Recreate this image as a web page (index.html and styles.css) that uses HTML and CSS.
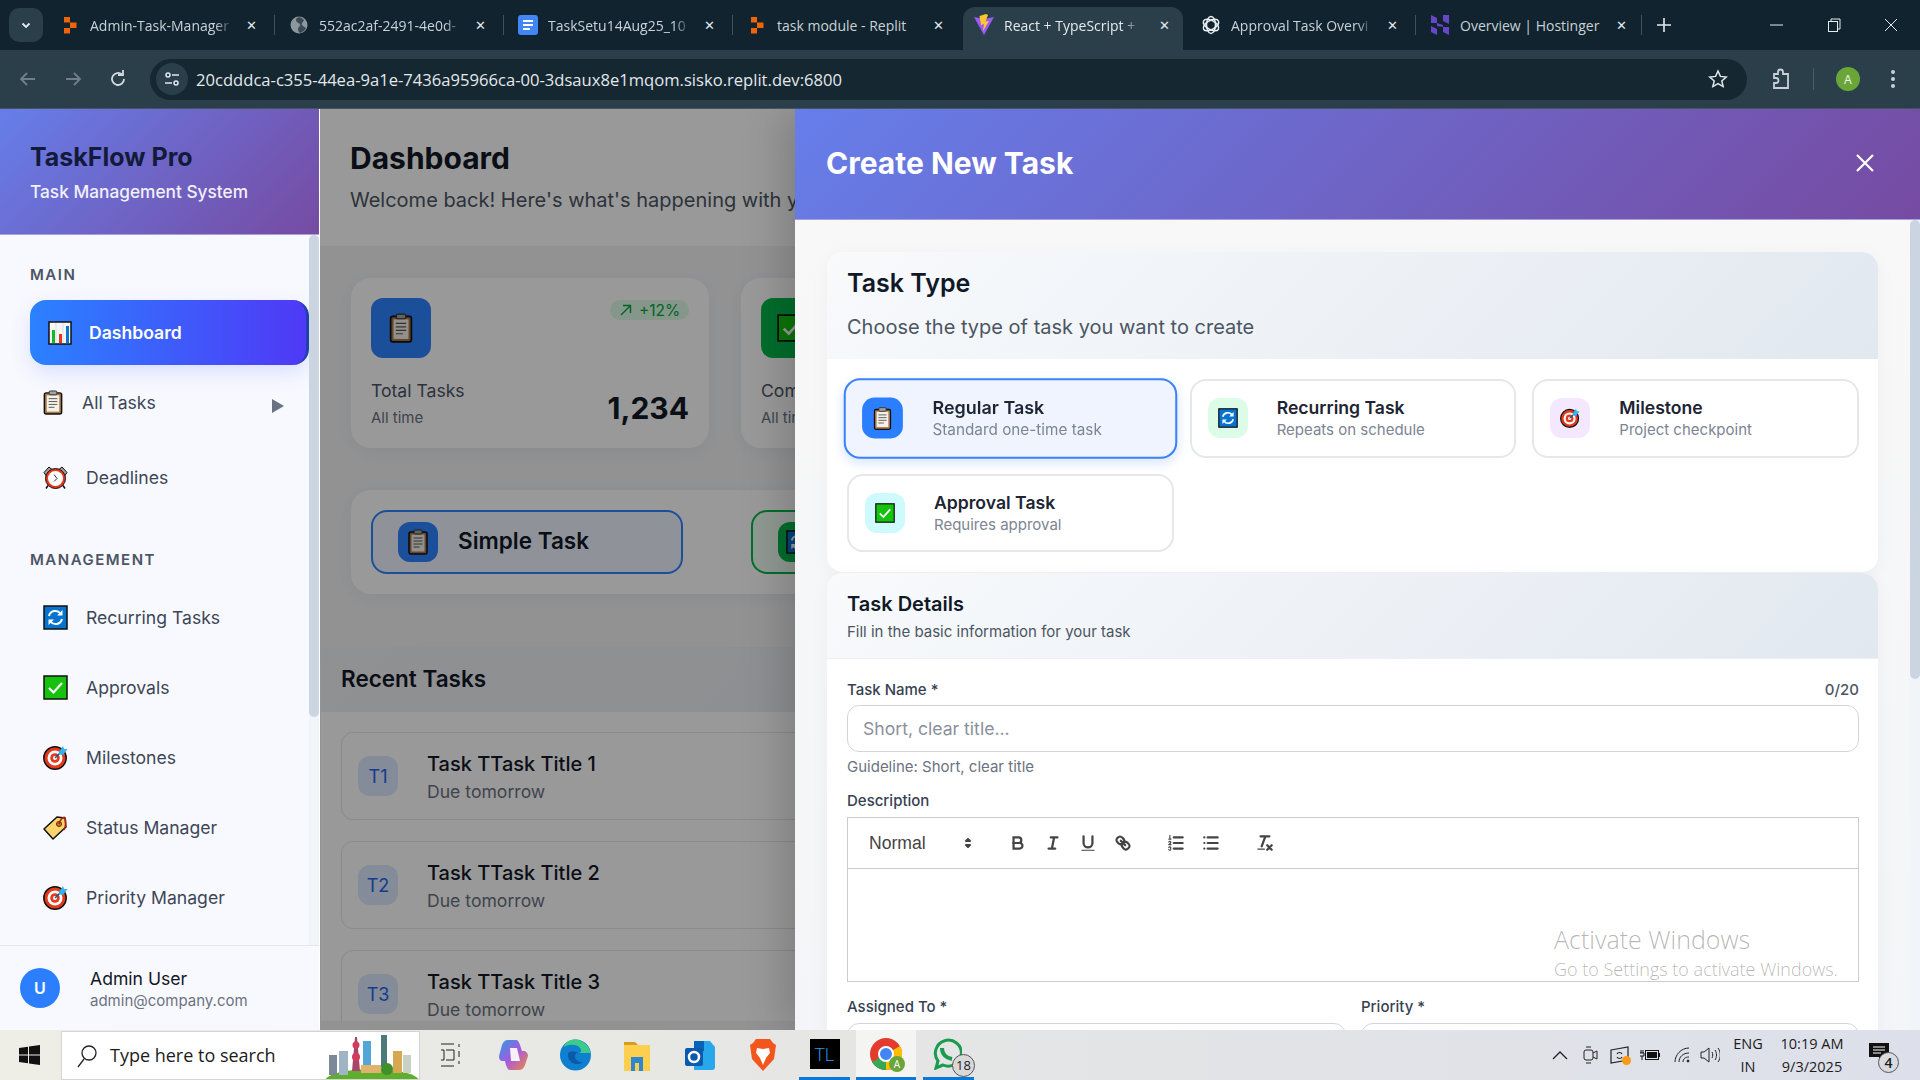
FILE: index.html
```html
<!DOCTYPE html>
<html lang="en">
<head>
    <meta charset="UTF-8">
    <title>React + TypeScript - TaskFlow Pro</title>
    <link rel="stylesheet" href="styles.css">
</head>
<body>
    <!-- shared emoji style icons -->
    <svg class="defs" width="0" height="0">
        <symbol id="i-clip" viewBox="0 0 20 26">
            <rect x="1" y="3" width="18" height="22" rx="2" fill="#a9764c" stroke="#111" stroke-width="1.5"/>
            <rect x="3.5" y="5.5" width="13" height="17" fill="#f5f1e8"/>
            <rect x="6" y="1" width="8" height="4" rx="1" fill="#a3a3a3" stroke="#333"/>
            <path d="M5.5 9h9M5.5 12h9M5.5 15h9M5.5 18h6" stroke="#555" stroke-width="1"/>
        </symbol>
        <symbol id="i-chart" viewBox="0 0 24 24">
            <rect x="1" y="1" width="22" height="22" fill="#f6f6f6" stroke="#111" stroke-width="1.5"/>
            <path d="M8 2v20M15 2v20" stroke="#ddd"/>
            <rect x="4" y="9" width="3" height="13" fill="#16b82a"/>
            <rect x="11" y="13" width="3" height="9" fill="#e8341c"/>
            <rect x="18" y="5" width="3" height="17" fill="#0a74d0"/>
        </symbol>
        <symbol id="i-clock" viewBox="0 0 25 24">
            <path d="M1 7 6 1.500 9 4 3 10ZM24 7 19 1.500 16 4 22 10Z" fill="#a0a0a0" stroke="#111"/>
            <path d="M5 20 3 23M20 20l2 3" stroke="#111" stroke-width="1.500"/>
            <circle cx="12.500" cy="13" r="10" fill="#e5391c" stroke="#111"/>
            <circle cx="12.500" cy="13" r="7.500" fill="#fff"/>
            <path d="M11 9l3 4-3 3" fill="none" stroke="#333"/>
        </symbol>
        <symbol id="i-repeat" viewBox="0 0 25 25">
            <rect x="1" y="1" width="23" height="23" fill="#0673cf" stroke="#111" stroke-width="1.500"/>
            <path d="M6 11a6.500 6.500 0 0 1 11.500-2.500M19 14a6.500 6.500 0 0 1-11.500 2.500" fill="none" stroke="#fff" stroke-width="2"/>
            <path d="M19.500 5v5.500H14ZM5.500 20v-5.500H11Z" fill="#fff"/>
        </symbol>
        <symbol id="i-check" viewBox="0 0 25 25">
            <rect x="1" y="1" width="23" height="23" fill="#17c20f" stroke="#111" stroke-width="1.500"/>
            <path d="M6 13l4.500 4.500L19 8" fill="none" stroke="#fff" stroke-width="2.200"/>
        </symbol>
        <symbol id="i-target" viewBox="0 0 25 25">
            <circle cx="12" cy="13" r="11.200" fill="#e5391c" stroke="#111" stroke-width="1.500"/>
            <circle cx="12" cy="13" r="7.500" fill="#fff"/>
            <circle cx="12" cy="13" r="4.800" fill="#e5391c"/>
            <circle cx="12" cy="13" r="2" fill="#fff"/>
            <path d="M12 13 19 6" stroke="#0a5f9e" stroke-width="1.500"/>
            <path d="M16 7l4-6 1 3 3.500 0-4.500 6-3.500-.5Z" fill="#2fb4ee"/>
        </symbol>
        <symbol id="i-tag" viewBox="0 0 25 25">
            <path d="M1 14 14 2l8 1 1 9L10 24Z" fill="#fbd46d" stroke="#111" stroke-width="1.500" stroke-linejoin="round"/>
            <circle cx="16" cy="9" r="2.500" fill="#c9761c" stroke="#6b2c00"/>
            <path d="M16 9c1-5 5-8 6-6s1 8-1 12" fill="none" stroke="#b3200c" stroke-width="1.500"/>
        </symbol>
        <symbol id="i-replit" viewBox="0 0 14 18">
            <path d="M1 1h6v5.500H1ZM7 6.500h6.500V12H7ZM1 12h6v5.500H1Z" fill="#f26207"/>
        </symbol>
    </svg>

    <div class="tabstrip">
        <div class="tab-list-btn">
            <svg width="12" height="12" viewBox="0 0 12 12"><path d="M2.500 4.500 6 8l3.500-3.500" fill="none" stroke="#e6ebee" stroke-width="1.800"/></svg>
        </div>
        <div class="tab">
            <span class="tab-icon"><svg width="14" height="18"><use href="#i-replit"/></svg></span>
            <span class="tab-title">Admin-Task-Manager</span>
            <span class="tab-close">&#10005;</span>
        </div>
        <div class="tab">
            <span class="tab-icon">
                <svg width="18" height="18" viewBox="0 0 18 18"><circle cx="9" cy="9" r="8.500" fill="#8b969d"/><path d="M9 1c-3 1-4 3-2 5s3 1 3 3-2 2-2 4 1 3 2 4c3-1 5-3 6-5-2-1-3-2-4-3s1-3 2-5C12 2 10 1 9 1Z" fill="#3b4a54"/></svg>
            </span>
            <span class="tab-title">552ac2af-2491-4e0d-</span>
            <span class="tab-close">&#10005;</span>
        </div>
        <div class="tab">
            <span class="tab-icon">
                <svg width="20" height="20" viewBox="0 0 20 20"><rect width="20" height="20" rx="3" fill="#4285f4"/><path d="M5 6h10M5 10h10M5 14h7" stroke="#fff" stroke-width="2"/></svg>
            </span>
            <span class="tab-title">TaskSetu14Aug25_10</span>
            <span class="tab-close">&#10005;</span>
        </div>
        <div class="tab tab-plain">
            <span class="tab-icon"><svg width="14" height="18"><use href="#i-replit"/></svg></span>
            <span class="tab-title">task module - Replit</span>
            <span class="tab-close">&#10005;</span>
        </div>
        <div class="tab tab-active">
            <span class="tab-icon">
                <svg width="20" height="22" viewBox="0 0 20 22"><path d="M0 3 10 21 20 3 10 5Z" fill="#9a5cf5"/><path d="M12 0 5.500 2 7 11 10 10l-1 7 6-10-3.500.5L14 1Z" fill="#fdc72d"/></svg>
            </span>
            <span class="tab-title">React + TypeScript +</span>
            <span class="tab-close">&#10005;</span>
        </div>
        <div class="tab">
            <span class="tab-icon">
                <svg width="20" height="20" viewBox="0 0 20 20" fill="none" stroke="#e8edf0" stroke-width="1.500"><ellipse cx="10" cy="10" rx="8.500" ry="4.500" transform="rotate(30 10 10)"/><ellipse cx="10" cy="10" rx="8.500" ry="4.500" transform="rotate(90 10 10)"/><ellipse cx="10" cy="10" rx="8.500" ry="4.500" transform="rotate(150 10 10)"/></svg>
            </span>
            <span class="tab-title">Approval Task Overvi</span>
            <span class="tab-close">&#10005;</span>
        </div>
        <div class="tab tab-last">
            <span class="tab-icon">
                <svg width="18" height="20" viewBox="0 0 18 20"><path d="M0 0l6 3v5L0 8ZM12 0l6-0v9l-6-3ZM0 11l6 3v6l-6-3ZM12 12h6v8l-6-3ZM6 8l6 2v2l-6-1Z" fill="#6747c7"/></svg>
            </span>
            <span class="tab-title">Overview | Hostinger</span>
            <span class="tab-close">&#10005;</span>
        </div>
        <div class="new-tab">
            <svg width="14" height="14" viewBox="0 0 14 14"><path d="M7 0v14M0 7h14" stroke="#e6ebee" stroke-width="1.600"/></svg>
        </div>
        <div class="win-controls">
            <svg width="14" height="14" viewBox="0 0 14 14"><path d="M0 7h13" stroke="#e6ebee"/></svg>
            <svg width="14" height="14" viewBox="0 0 14 14" fill="none" stroke="#e6ebee"><rect x="1.500" y="3.500" width="9" height="10"/><path d="M4 3V1h9v10h-2"/></svg>
            <svg width="14" height="14" viewBox="0 0 14 14"><path d="M1 1l12 12M13 1 1 13" stroke="#e6ebee"/></svg>
        </div>
    </div>

    <div class="toolbar">
        <svg class="tb-btn" width="24" height="24" viewBox="0 0 24 24" fill="none" stroke="#6e7f89" stroke-width="1.800"><path d="M19 12H5M11 6l-6 6 6 6"/></svg>
        <svg class="tb-btn" width="24" height="24" viewBox="0 0 24 24" fill="none" stroke="#6e7f89" stroke-width="1.800"><path d="M5 12h14M13 6l6 6-6 6"/></svg>
        <svg class="tb-btn" width="24" height="24" viewBox="0 0 24 24" fill="none" stroke="#d3dade" stroke-width="1.800"><path d="M18 12a6 6 0 1 1-2-4.500"/><path d="M17 3v5h-5"/></svg>
        <div class="omnibox">
            <span class="site-info">
                <svg width="18" height="18" viewBox="0 0 18 18" fill="none" stroke="#e3e8ec" stroke-width="1.500"><circle cx="5" cy="5" r="2"/><path d="M9 5h7M2 13h7"/><circle cx="13" cy="13" r="2"/></svg>
            </span>
            <span class="url">20cdddca-c355-44ea-9a1e-7436a95966ca-00-3dsaux8e1mqom.sisko.replit.dev:6800</span>
            <svg class="star" width="20" height="20" viewBox="0 0 20 20" fill="none" stroke="#e3e8ec" stroke-width="1.500"><path d="M10 2l2.400 5.400 5.800.6-4.400 3.900 1.300 5.700L10 14.700l-5.100 2.900 1.300-5.700L1.800 8l5.800-.6Z"/></svg>
        </div>
        <svg class="tb-ext" width="24" height="24" viewBox="0 0 24 24" fill="none" stroke="#c7d0d6" stroke-width="1.800"><path d="M5 7h4V5a2.500 2.500 0 0 1 5 0v2h5v14H5v-5h2a2.500 2.500 0 0 0 0-5H5Z"/></svg>
        <span class="tb-sep"></span>
        <span class="profile">A</span>
        <svg class="tb-dots" width="24" height="24" viewBox="0 0 24 24" fill="#c7d0d6"><circle cx="12" cy="5" r="2"/><circle cx="12" cy="12" r="2"/><circle cx="12" cy="19" r="2"/></svg>
    </div>

    <div class="page">
        <aside class="sidebar">
            <div class="brand">
                <h1>TaskFlow Pro</h1>
                <p>Task Management System</p>
            </div>
            <div class="nav-wrap">
                <nav class="nav-list">
                    <div class="nav-label">MAIN</div>
                    <a class="nav-active"><svg class="nav-active-icon" width="24" height="24"><use href="#i-chart"/></svg>Dashboard</a>
                    <a class="nav-item nav-tasks"><svg class="nav-clip" width="20" height="25"><use href="#i-clip"/></svg>All Tasks<span class="nav-arrow"></span></a>
                    <a class="nav-item nav-deadlines"><svg class="nav-icon" width="25" height="25"><use href="#i-clock"/></svg>Deadlines</a>
                    <div class="nav-label nav-label-second">MANAGEMENT</div>
                    <a class="nav-item"><svg class="nav-icon" width="25" height="25"><use href="#i-repeat"/></svg>Recurring Tasks</a>
                    <a class="nav-item"><svg class="nav-icon" width="25" height="25"><use href="#i-check"/></svg>Approvals</a>
                    <a class="nav-item"><svg class="nav-icon" width="25" height="25"><use href="#i-target"/></svg>Milestones</a>
                    <a class="nav-item"><svg class="nav-icon" width="25" height="25"><use href="#i-tag"/></svg>Status Manager</a>
                    <a class="nav-item"><svg class="nav-icon" width="25" height="25"><use href="#i-target"/></svg>Priority Manager</a>
                </nav>
                <div class="scroll-track"><div class="scroll-thumb nav-thumb"></div></div>
            </div>
            <div class="user-row">
                <span class="avatar">U</span>
                <div class="user-text">
                    <div class="user-name">Admin User</div>
                    <div class="user-mail">admin@company.com</div>
                </div>
            </div>
        </aside>

        <main class="main">
            <header class="main-header">
                <h2>Dashboard</h2>
                <p>Welcome back! Here's what's happening with your tasks today.</p>
            </header>
            <section class="stats">
                <div class="stat-card">
                    <div class="stat-top">
                        <span class="stat-icon stat-blue"><svg width="24" height="30"><use href="#i-clip"/></svg></span>
                        <span class="stat-badge">
                            <svg width="14" height="14" viewBox="0 0 14 14" fill="none" stroke="#00a63e" stroke-width="1.400"><path d="M2 12 11 3M4 2.500h7.500V10"/></svg>
                            +12%
                        </span>
                    </div>
                    <div class="stat-bottom">
                        <div>
                            <div class="stat-label">Total Tasks</div>
                            <div class="stat-sub">All time</div>
                        </div>
                        <div class="stat-value">1,234</div>
                    </div>
                </div>
                <div class="stat-card">
                    <div class="stat-top">
                        <span class="stat-icon stat-green"><svg width="28" height="28"><use href="#i-check"/></svg></span>
                    </div>
                    <div class="stat-bottom">
                        <div>
                            <div class="stat-label">Completed</div>
                            <div class="stat-sub">All time</div>
                        </div>
                    </div>
                </div>
            </section>
            <section class="quick-panel">
                <div class="quick-btn quick-blue">
                    <span class="quick-icon stat-blue"><svg width="20" height="26"><use href="#i-clip"/></svg></span>
                    <span class="quick-text">Simple Task</span>
                </div>
                <div class="quick-btn quick-green">
                    <span class="quick-icon stat-green"><svg width="24" height="24"><use href="#i-repeat"/></svg></span>
                </div>
            </section>
            <section class="recent">
                <div class="recent-head">Recent Tasks</div>
                <div class="recent-body">
                    <div class="recent-item">
                        <span class="recent-icon">T1</span>
                        <div>
                            <div class="recent-title">Task TTask Title 1</div>
                            <div class="recent-due">Due tomorrow</div>
                        </div>
                    </div>
                    <div class="recent-item">
                        <span class="recent-icon">T2</span>
                        <div>
                            <div class="recent-title">Task TTask Title 2</div>
                            <div class="recent-due">Due tomorrow</div>
                        </div>
                    </div>
                    <div class="recent-item">
                        <span class="recent-icon">T3</span>
                        <div>
                            <div class="recent-title">Task TTask Title 3</div>
                            <div class="recent-due">Due tomorrow</div>
                        </div>
                    </div>
                </div>
            </section>
        </main>

        <div class="overlay"></div>

        <div class="modal">
            <div class="modal-head">
                <h2>Create New Task</h2>
                <svg width="20" height="20" viewBox="0 0 20 20"><path d="M2 2l16 16M18 2 2 18" stroke="#fff" stroke-width="2.200"/></svg>
            </div>
            <div class="modal-body">
                <div class="modal-scroll">
                    <section class="form-card type-card">
                        <div class="type-head">
                            <h3>Task Type</h3>
                            <p>Choose the type of task you want to create</p>
                        </div>
                        <div class="type-grid">
                            <div class="type-option type-selected">
                                <span class="type-icon type-blue"><svg width="18" height="23"><use href="#i-clip"/></svg></span>
                                <div>
                                    <div class="type-name">Regular Task</div>
                                    <div class="type-desc">Standard one-time task</div>
                                </div>
                            </div>
                            <div class="type-option">
                                <span class="type-icon type-mint"><svg width="20" height="20"><use href="#i-repeat"/></svg></span>
                                <div>
                                    <div class="type-name">Recurring Task</div>
                                    <div class="type-desc">Repeats on schedule</div>
                                </div>
                            </div>
                            <div class="type-option">
                                <span class="type-icon type-lilac"><svg width="20" height="20"><use href="#i-target"/></svg></span>
                                <div>
                                    <div class="type-name">Milestone</div>
                                    <div class="type-desc">Project checkpoint</div>
                                </div>
                            </div>
                            <div class="type-option">
                                <span class="type-icon type-cyan"><svg width="20" height="20"><use href="#i-check"/></svg></span>
                                <div>
                                    <div class="type-name">Approval Task</div>
                                    <div class="type-desc">Requires approval</div>
                                </div>
                            </div>
                        </div>
                    </section>

                    <section class="form-card details-card">
                        <div class="details-head">
                            <h3>Task Details</h3>
                            <p>Fill in the basic information for your task</p>
                        </div>
                        <div class="details-body">
                            <div class="label-row">
                                <label>Task Name *</label>
                                <span class="counter">0/20</span>
                            </div>
                            <input class="text-input" type="text" placeholder="Short, clear title...">
                            <div class="helper">Guideline: Short, clear title</div>
                            <div class="label-row desc-label"><label>Description</label></div>
                            <div class="editor">
                                <div class="editor-bar">
                                    <span class="picker">Normal</span>
                                    <svg class="ql-arrows" width="18" height="18" viewBox="0 0 18 18"><polygon points="7 11 9 13 11 11"/><polygon points="7 7 9 5 11 7"/></svg>
                                    <svg class="ql ql-bold" viewBox="0 0 18 18"><path d="M5,4H9.500A2.500,2.500,0,0,1,12,6.500v0A2.500,2.500,0,0,1,9.500,9H5V4Z"/><path d="M5,9h5.500A2.500,2.500,0,0,1,13,11.500v0A2.500,2.500,0,0,1,10.500,14H5V9Z"/></svg>
                                    <svg class="ql" viewBox="0 0 18 18"><path d="M7 4h6M5 14h6M8 14l2-10"/></svg>
                                    <svg class="ql" viewBox="0 0 18 18"><path d="M5,3V9a4,4,0,0,0,4,4h0a4,4,0,0,0,4-4V3"/><rect class="ql-fill" x="3" y="15" width="12" height="1" rx=".5"/></svg>
                                    <svg class="ql" viewBox="0 0 18 18"><path d="M7 7l4 4"/><path d="M8.900,4.577a3.476,3.476,0,0,1,.36,4.679A3.476,3.476,0,0,1,4.577,8.900C3.185,7.500,2.035,6.400,4.217,4.217S7.500,3.185,8.900,4.577Z"/><path d="M13.423,9.100a3.476,3.476,0,0,0-4.679-.36,3.476,3.476,0,0,0,.36,4.679c1.392,1.392,2.500,2.542,4.679.36S14.815,10.500,13.423,9.100Z"/></svg>
                                    <svg class="ql ql-gap" viewBox="0 0 18 18"><path d="M7 4h8M7 9h8M7 14h8"/><path class="ql-thin" d="M3.500 2v3.500M2.500 5.500h2M4.500 10.500h-2c0-.23 1.850-1.080 1.850-2.230a.96.96 0 0 0-1.850-.11M2.500 14.850a.96.96 0 0 0 1.850-.11.7.7 0 0 0-.6-.74.69.69 0 0 0 .6-.74.96.96 0 0 0-1.850-.11"/></svg>
                                    <svg class="ql" viewBox="0 0 18 18"><path d="M6 4h9M6 9h9M6 14h9M3 4h.01M3 9h.01M3 14h.01"/></svg>
                                    <svg class="ql ql-gap2" viewBox="0 0 18 18"><path d="M5 3h8M6 12l3.350-9M11 11l4 4M15 11l-4 4"/><rect class="ql-fill" x="2" y="14" width="7" height="1" rx=".5"/></svg>
                                </div>
                                <div class="editor-area"></div>
                            </div>
                            <div class="two-col">
                                <div>
                                    <div class="label-row"><label>Assigned To *</label></div>
                                    <div class="select-box"></div>
                                </div>
                                <div>
                                    <div class="label-row"><label>Priority *</label></div>
                                    <div class="select-box"></div>
                                </div>
                            </div>
                        </div>
                    </section>
                </div>
                <div class="scroll-track modal-track"><div class="scroll-thumb modal-thumb"></div></div>
            </div>
        </div>

        <div class="activate">
            <div class="activate-title">Activate Windows</div>
            <div class="activate-sub">Go to Settings to activate Windows.</div>
        </div>
    </div>

    <div class="taskbar">
        <svg class="win-logo" width="21" height="20" viewBox="0 0 21 20" fill="#111"><path d="M0 3l9-1.300V9.500H0ZM10 1.500 21 0v9.500H10ZM0 10.500h9v7.800L0 17ZM10 10.500h11V20l-11-1.500Z"/></svg>
        <div class="search">
            <svg width="22" height="24" viewBox="0 0 22 24" fill="none" stroke="#222" stroke-width="1.300"><circle cx="13" cy="9" r="7"/><path d="M8 15 2 23"/></svg>
            <span class="search-text">Type here to search</span>
            <svg class="city" width="94" height="48" viewBox="0 0 94 48">
                <ellipse cx="47" cy="50" rx="47" ry="12" fill="#5fae2e"/>
                <rect x="4" y="24" width="8" height="20" fill="#7a8899"/>
                <rect x="14" y="20" width="9" height="24" fill="#9fb4c4"/>
                <path d="M27 40 30 6h2l3 34Z" fill="#a8456b"/>
                <circle cx="31" cy="14" r="3.500" fill="#d33a5f"/>
                <circle cx="31" cy="26" r="4" fill="#d33a5f"/>
                <rect x="38" y="10" width="8" height="30" fill="#52a7d8"/>
                <rect x="56" y="4" width="6" height="32" fill="#4b7a78"/>
                <rect x="36" y="34" width="20" height="8" fill="#e0b26b"/>
                <rect x="68" y="20" width="9" height="22" fill="#d8a752"/>
                <rect x="78" y="24" width="8" height="18" fill="#c9d1c7"/>
                <circle cx="62" cy="38" r="6" fill="#3f8f2b"/>
            </svg>
        </div>
        <svg class="task-view" width="20" height="24" viewBox="0 0 20 24" fill="none" stroke="#222"><path d="M0 1h13M0 7h3v10H0M13 7v10M5 7h8M5 17h8M0 23h13M18 1v3M18 8v6M18 18v3"/></svg>
        <svg class="app app-copilot" width="29" height="32" viewBox="0 0 29 32"><defs><linearGradient id="cop" x1="0" y1="0" x2="1" y2="1"><stop offset="0" stop-color="#2b9be0"/><stop offset=".5" stop-color="#a45be0"/><stop offset="1" stop-color="#f08a3c"/></linearGradient></defs><path d="M9 1h8c2 0 3 2 4 5l2 6h2c2 0 4 2 4 5l-3 9c-1 3-3 5-6 5h-9c-2 0-3-2-4-5l-1-4H4c-3 0-4-2-4-5l3-11C4 3 6 1 9 1Z" fill="url(#cop)"/><path d="M11 9h7l3 13h-9Z" fill="#f5f0fa"/></svg>
        <svg class="app app-edge" width="31" height="32" viewBox="0 0 31 32"><circle cx="15.500" cy="16" r="15.500" fill="#0f7fd0"/><path d="M31 18C31 7 23 .5 15 .5 9 .5 5 4 4 8c5-3 13-3 16 1 2 3 1 5-2 5H31Z" fill="#3dcb8a"/><path d="M8 14c-1 6 3 11 9 11 2 0 4-.5 6-1.500-4-.5-8-2-8-6 0-2 1-3.500 3-3.500-4-2.500-9-1.500-10 0Z" fill="#0a5aa8"/></svg>
        <svg class="app app-folder" width="28" height="32" viewBox="0 0 28 32"><path d="M1 3h11l3 3H1Z" fill="#d99c1e"/><rect x="1" y="6" width="26" height="26" fill="#fdcf4e"/><rect x="8" y="18" width="12" height="14" fill="#2e86cf"/><rect x="12" y="24" width="4" height="8" fill="#fdcf4e"/></svg>
        <svg class="app app-outlook" width="32" height="32" viewBox="0 0 32 32"><path d="M10 2h16l5 6v20a3 3 0 0 1-3 3H10Z" fill="#28a8ea"/><path d="M10 2h10v10H10Z" fill="#0364b8"/><rect x="1" y="9" width="18" height="18" rx="2" fill="#0a5bb0"/><circle cx="10" cy="18" r="5" fill="none" stroke="#fff" stroke-width="2.500"/></svg>
        <svg class="app app-brave" width="26" height="32" viewBox="0 0 26 32"><path d="M6 0h14l3 4 3 2-2 14-11 12L2 20 0 6l3-2Z" fill="#f2561d"/><path d="M7 9l6 1 6-1 1 5-4 5-3 7-3-7-4-5Z" fill="#fff"/></svg>
        <div class="app-wrap app-tl"><span class="tl-box">TL</span></div>
        <div class="app-wrap app-chrome">
            <svg width="32" height="32" viewBox="0 0 32 32"><circle cx="16" cy="16" r="16" fill="#e33b2e"/><path d="M16 16 2 24A16 16 0 0 0 16 32Z" fill="#34a853"/><path d="M16 16 30 8a16 16 0 0 1-14 24Z" fill="#fbbc04"/><circle cx="16" cy="16" r="7" fill="#4285f4" stroke="#fff" stroke-width="2"/></svg>
            <span class="chrome-badge">A</span>
        </div>
        <div class="app-wrap app-whatsapp">
            <svg class="wa-icon" width="30" height="32" viewBox="0 0 30 32" fill="none" stroke="#1a9c4f" stroke-width="3"><path d="M4 30l2-7A13 13 0 1 1 11 27Z"/><path d="M10 10c0 6 4 10 10 11" stroke-width="4"/></svg>
            <span class="wa-badge">18</span>
        </div>
        <div class="tray">
            <svg class="tray-chevron" width="16" height="10" viewBox="0 0 16 10" fill="none" stroke="#222" stroke-width="1.300"><path d="M1 9l7-7 7 7"/></svg>
            <svg class="tray-meet" width="15" height="20" viewBox="0 0 15 20" fill="none" stroke="#222"><rect x="1" y="5" width="9" height="10" rx="2"/><path d="M10 8l4-2v8l-4-2M3 2h5M3 18h5"/></svg>
            <div class="tray-cast">
                <svg width="20" height="20" viewBox="0 0 20 20" fill="none" stroke="#222" stroke-width="1.200"><path d="M1 5l17-3v13L1 18Z"/><path d="M7 9c1-2 4-2 5 0M12 12c-1 2-4 2-5 0"/></svg>
                <span class="cast-dot"></span>
            </div>
            <svg class="tray-battery" width="20" height="12" viewBox="0 0 20 12"><rect x="5.500" y="1.500" width="13" height="9" fill="none" stroke="#111"/><rect x="7" y="3" width="10" height="6" fill="#111"/><rect x="19" y="4" width="1" height="4" fill="#111"/><path d="M0 4h4v3H0M1 1v3M3 1v3M2 7v4" stroke="#111" fill="none"/></svg>
            <svg class="tray-wifi" width="16" height="16" viewBox="0 0 16 16" fill="none" stroke="#222"><path d="M1 15C1 8 7 1 15 1M5 15c0-5 4-9 10-9M9 15c0-3 2-5 6-5"/><circle cx="14" cy="14" r="1" fill="#222"/></svg>
            <svg class="tray-sound" width="20" height="18" viewBox="0 0 20 18" fill="none" stroke="#222"><path d="M1 6h3l5-4v14l-5-4H1ZM12 6c1 2 1 4 0 6M15 4c2 3 2 7 0 10M18 2c3 4 3 10 0 14"/></svg>
            <div class="tray-lang"><div>ENG</div><div>IN</div></div>
            <div class="tray-clock"><div>10:19 AM</div><div>9/3/2025</div></div>
            <div class="tray-notify">
                <svg width="20" height="19" viewBox="0 0 20 19" fill="#111"><path d="M0 0h20v14h-7l-3 5v-5H0Z"/><path d="M4 4h12M4 7h12M4 10h8" stroke="#fff"/></svg>
                <span class="notify-badge">4</span>
            </div>
        </div>
    </div>
</body>
</html>
```
FILE: styles.css
```css
* {
    box-sizing: border-box;
}

html, body {
    margin: 0;
    padding: 0;
    width: 1920px;
    height: 1080px;
    overflow: hidden;
}

body {
    font-family: Inter, "Noto Sans", sans-serif;
    display: flex;
    flex-direction: column;
    background-color: #f3f4f6;
}

h1, h2, h3, p {
    margin: 0;
}

.defs {
    display: block;
    height: 0;
}

/* browser tabs */
.tabstrip {
    height: 50px;
    flex: none;
    display: flex;
    align-items: center;
    background-color: #10232e;
    font-family: "Open Sans", "Noto Sans", sans-serif;
    font-size: 14px;
    color: #c9d2d8;
}

.tab-list-btn {
    width: 34px;
    height: 34px;
    margin: 0 3px 0 9px;
    background-color: #2b3f4a;
    border-radius: 10px;
    display: flex;
    align-items: center;
    justify-content: center;
}

.tab {
    width: 229px;
    height: 50px;
    padding-left: 14px;
    display: flex;
    align-items: center;
    position: relative;
}

.tab::after {
    content: "";
    position: absolute;
    right: 0;
    top: 15px;
    height: 20px;
    width: 1px;
    background-color: #3f515c;
}

.tab-plain::after,
.tab-active::after {
    display: none;
}

.tab-active {
    width: 220px;
    margin: 7px 4px 0 1px;
    height: 43px;
    padding-left: 11px;
    padding-bottom: 7px;
    background-color: #2b3f4a;
    border-radius: 12px 12px 0 0;
    color: #e3e8ec;
}

.tab-last {
    width: 226px;
}

.tab-icon {
    width: 20px;
    margin-right: 10px;
    display: flex;
    justify-content: center;
    flex: none;
}

.tab-title {
    width: 143px;
    white-space: nowrap;
    overflow: hidden;
    -webkit-mask-image: linear-gradient(to right, #000 88%, transparent);
    mask-image: linear-gradient(to right, #000 88%, transparent);
}

.tab-plain .tab-title,
.tab-last .tab-title {
    -webkit-mask-image: none;
    mask-image: none;
}

.tab-active .tab-title {
    width: 136px;
}

.tab-close {
    width: 16px;
    margin-left: 10px;
    font-size: 13px;
    text-align: center;
    color: #e3e8ec;
}

.tab-active .tab-close {
    margin-left: 16px;
}

.new-tab {
    margin-left: 15px;
    display: flex;
}

.win-controls {
    margin-left: auto;
    width: 150px;
    padding-right: 22px;
    display: flex;
    justify-content: space-between;
}

/* address bar */
.toolbar {
    height: 59px;
    flex: none;
    display: flex;
    align-items: center;
    padding-left: 16px;
    background-color: #2b3f4a;
    border-bottom: 1px solid #44555f;
}

.tb-btn {
    margin-right: 21px;
}

.tb-btn:nth-child(3) {
    margin-right: 20px;
}

.omnibox {
    width: 1597px;
    height: 41px;
    display: flex;
    align-items: center;
    padding-left: 6px;
    background-color: #152731;
    border-radius: 21px;
}

.site-info {
    width: 32px;
    height: 32px;
    border-radius: 50%;
    background-color: #2b3f4a;
    display: flex;
    align-items: center;
    justify-content: center;
}

.url {
    margin: 1px 0 0 8px;
    font-family: "Open Sans", "Noto Sans", sans-serif;
    font-size: 16.6px;
    color: #e3e8ec;
}

.star {
    margin-left: auto;
    margin-right: 19px;
}

.tb-ext {
    margin-left: 22px;
}

.tb-sep {
    width: 1px;
    height: 22px;
    margin-left: 20px;
    background-color: #4a5b65;
}

.profile {
    width: 24px;
    height: 24px;
    margin-left: 22px;
    border-radius: 50%;
    background-color: #6aa53a;
    color: #e8f2dd;
    font-size: 12px;
    display: flex;
    align-items: center;
    justify-content: center;
}

.tb-dots {
    margin-left: 21px;
}

/* app */
.page {
    flex: 1;
    min-height: 0;
    display: flex;
    position: relative;
    overflow: hidden;
}

.sidebar {
    width: 320px;
    flex: none;
    display: flex;
    flex-direction: column;
    background-color: #f8f9fe;
    border-right: 1px solid #fff;
    position: relative;
    z-index: 3;
}

.brand {
    height: 126px;
    flex: none;
    padding: 33px 0 0 30px;
    background: linear-gradient(135deg, #667eea, #764ba2);
    border-bottom: 1px solid #a99fdc;
}

.brand h1 {
    font-size: 25px;
    line-height: 30px;
    font-weight: 700;
    color: #141a3a;
}

.brand p {
    margin-top: 7px;
    font-size: 17.3px;
    line-height: 26px;
    font-weight: 500;
    color: #f1f0fb;
}

.nav-wrap {
    flex: 1;
    min-height: 0;
    display: flex;
}

.nav-list {
    flex: 1;
    padding: 30px 0 0 30px;
    overflow: hidden;
}

.nav-label {
    font-size: 15px;
    line-height: 20px;
    font-weight: 600;
    letter-spacing: 1.5px;
    color: #4b5563;
    margin-bottom: 15px;
}

.nav-label-second {
    margin-top: 42px;
    margin-bottom: 18px;
}

.nav-active {
    height: 65px;
    display: flex;
    align-items: center;
    padding-left: 18px;
    font-size: 17.6px;
    font-weight: 600;
    color: #fff;
    background: linear-gradient(90deg, #2b82ff, #4f39f6);
    border-right: 3px solid #2140b0;
    border-radius: 16px;
    box-shadow: 0 8px 20px rgba(59, 90, 246, 0.15);
}

.nav-active-icon {
    margin-right: 17px;
}

.nav-item {
    height: 60px;
    margin-top: 10px;
    padding: 0 0 1px 13px;
    display: flex;
    align-items: center;
    font-size: 17.6px;
    font-weight: 400;
    color: #3d4656;
}

.nav-tasks {
    height: 56px;
}

.nav-deadlines {
    margin-top: 17px;
}

.nav-icon {
    margin-right: 18px;
}

.nav-clip {
    margin-right: 19px;
}

.nav-arrow {
    width: 0;
    height: 0;
    margin: 7px 25px 0 auto;
    border-left: 12px solid #6b7280;
    border-top: 7px solid transparent;
    border-bottom: 7px solid transparent;
}

.scroll-track {
    width: 10px;
    flex: none;
    background-color: #f1f5f9;
}

.scroll-thumb {
    background-color: #cbd5e1;
    border-radius: 5px;
}

.nav-thumb {
    height: 482px;
}

.user-row {
    height: 85px;
    flex: none;
    display: flex;
    align-items: center;
    padding-left: 20px;
    border-top: 1px solid #e5e7eb;
}

.avatar {
    width: 40px;
    height: 40px;
    margin-right: 30px;
    border-radius: 50%;
    background-color: #2b7fff;
    color: #fff;
    font-weight: 600;
    font-size: 16px;
    display: flex;
    align-items: center;
    justify-content: center;
}

.user-text {
    padding-top: 4px;
}

.user-name {
    font-size: 17.6px;
    line-height: 22px;
    font-weight: 400;
    color: #111827;
}

.user-mail {
    font-size: 15px;
    line-height: 22px;
    color: #6b7280;
}

/* dimmed dashboard */
.main {
    flex: 1;
    min-width: 0;
    height: 912px;
    overflow: hidden;
}

.main-header {
    height: 137px;
    padding: 29px 0 0 30px;
    background-color: #fff;
    white-space: nowrap;
}

.main-header h2 {
    font-size: 30px;
    line-height: 40px;
    font-weight: 700;
    color: #111827;
}

.main-header p {
    margin-top: 8px;
    font-size: 20px;
    line-height: 28px;
    color: #4b5563;
}

.stats {
    display: flex;
    gap: 32px;
    margin: 32px 0 0 31px;
}

.stat-card {
    width: 358px;
    height: 170px;
    flex: none;
    padding: 20px;
    background-color: #fff;
    border-radius: 20px;
    box-shadow: 0 4px 20px rgba(0, 0, 0, 0.05);
}

.stat-top {
    display: flex;
    justify-content: space-between;
    align-items: flex-start;
}

.stat-icon {
    width: 60px;
    height: 60px;
    border-radius: 12px;
    display: flex;
    align-items: center;
    justify-content: center;
}

.stat-blue {
    background-color: #2f84ff;
}

.stat-green {
    background-color: #00b84a;
}

.stat-badge {
    margin-top: 2px;
    width: 79px;
    height: 20px;
    border-radius: 10px;
    background-color: #dcfce7;
    color: #00a63e;
    font-size: 15.5px;
    display: flex;
    align-items: center;
    justify-content: center;
    gap: 6px;
}

.stat-bottom {
    margin-top: 21px;
    display: flex;
    justify-content: space-between;
    align-items: flex-end;
}

.stat-label {
    font-size: 17.6px;
    line-height: 24px;
    color: #4b5563;
}

.stat-sub {
    margin-top: 5px;
    font-size: 15px;
    line-height: 20px;
    color: #6b7280;
}

.stat-value {
    font-size: 30px;
    line-height: 40px;
    font-weight: 700;
    color: #111827;
}

.quick-panel {
    width: 1538px;
    height: 104px;
    margin: 42px 0 0 31px;
    padding: 20px;
    display: flex;
    gap: 68px;
    background-color: #fff;
    border-radius: 20px;
    box-shadow: 0 4px 20px rgba(0, 0, 0, 0.05);
}

.quick-btn {
    width: 312px;
    height: 64px;
    flex: none;
    padding-left: 25px;
    display: flex;
    align-items: center;
    gap: 20px;
    font-size: 22.5px;
    font-weight: 600;
    color: #111827;
    border-radius: 16px;
    border: 2px solid;
}

.quick-text {
    margin-bottom: 4px;
}

.quick-blue {
    border-color: #2f84ff;
    background-color: #eff6ff;
}

.quick-green {
    border-color: #00b84a;
    background-color: #f0fdf4;
}

.quick-icon {
    width: 40px;
    height: 40px;
    border-radius: 12px;
    display: flex;
    align-items: center;
    justify-content: center;
}

.recent {
    margin: 53px 0 0 1px;
    height: 374px;
    overflow: hidden;
    background-color: #fff;
}

.recent-head {
    height: 65px;
    padding-left: 20px;
    font-size: 22.5px;
    line-height: 63px;
    font-weight: 600;
    color: #111827;
    background: linear-gradient(135deg, #f1f2f4, #e2e8f0);
}

.recent-body {
    padding: 20px 20px 0;
    display: flex;
    flex-direction: column;
    gap: 21px;
}

.recent-item {
    height: 88px;
    flex: none;
    padding-left: 16px;
    display: flex;
    align-items: center;
    gap: 29px;
    border: 1px solid #e5e7eb;
    border-radius: 12px;
}

.recent-icon {
    width: 40px;
    height: 40px;
    border-radius: 12px;
    background-color: #dbeafe;
    color: #2563eb;
    font-size: 18px;
    display: flex;
    align-items: center;
    justify-content: center;
}

.recent-title {
    margin-top: 2px;
    font-size: 20px;
    line-height: 28px;
    font-weight: 500;
    color: #111827;
}

.recent-due {
    margin-top: 2px;
    font-size: 17.6px;
    line-height: 24px;
    color: #6b7280;
}

.overlay {
    position: absolute;
    top: 0;
    right: 0;
    bottom: 0;
    left: 320px;
    background-color: rgba(0, 0, 0, 0.4);
}

/* create task panel */
.modal {
    position: absolute;
    top: 0;
    right: 0;
    bottom: 0;
    width: 1125px;
    display: flex;
    flex-direction: column;
    background-color: #f8f8f8;
    box-shadow: -10px 0 40px rgba(0, 0, 0, 0.18);
}

.modal-head {
    height: 111px;
    flex: none;
    display: flex;
    align-items: center;
    justify-content: space-between;
    padding: 0 45px 2px 31px;
    background: linear-gradient(135deg, #667eea, #764ba2);
    border-bottom: 1px solid #a99fdc;
}

.modal-head h2 {
    font-size: 30px;
    font-weight: 700;
    color: #fff;
}

.modal-body {
    flex: 1;
    min-height: 0;
    display: flex;
    background: linear-gradient(180deg, #f8f8f8, #f4f5f8);
}

.modal-scroll {
    flex: 1;
    min-width: 0;
    padding: 32px 32px 0;
    overflow: hidden;
}

.modal-thumb {
    height: 459px;
}

.form-card {
    background-color: #fff;
    border-radius: 16px;
    overflow: hidden;
    box-shadow: 0 4px 20px rgba(0, 0, 0, 0.04);
}

.type-head {
    height: 107px;
    padding: 15px 20px 0;
    background: linear-gradient(135deg, #f8fafc, #e2e8f0);
}

.type-head h3 {
    font-size: 25px;
    line-height: 32px;
    font-weight: 600;
    color: #111827;
}

.type-head p {
    margin-top: 14px;
    font-size: 20px;
    line-height: 28px;
    color: #4b5563;
}

.type-grid {
    padding: 20px 19px 20px 20px;
    display: grid;
    grid-template-columns: repeat(3, 1fr);
    gap: 16px;
}

.type-option {
    height: 78.6px;
    padding-left: 16px;
    display: flex;
    align-items: center;
    gap: 29px;
    background-color: #fff;
    border: 2px solid #e5e7eb;
    border-radius: 16px;
}

.type-selected {
    transform: scale(1.02);
    background-color: #eff4ff;
    border-color: #3b82f6;
    box-shadow: 0 4px 10px rgba(59, 130, 246, 0.2);
}

.type-icon {
    width: 40px;
    height: 40px;
    border-radius: 12px;
    display: flex;
    align-items: center;
    justify-content: center;
}

.type-blue {
    background-color: #2b7fff;
}

.type-mint {
    background-color: #dcfce7;
}

.type-lilac {
    background-color: #f3e8ff;
}

.type-cyan {
    background-color: #cefafe;
}

.type-name {
    font-size: 17.6px;
    line-height: 24px;
    font-weight: 600;
    color: #1e2433;
}

.type-desc {
    font-size: 15px;
    line-height: 20px;
    color: #7d8493;
}

.details-card {
    margin-top: 1px;
}

.details-head {
    height: 86px;
    padding: 18px 20px 0;
    background: linear-gradient(135deg, #f8fafc, #e2e8f0);
    border-bottom: 1px solid #eceff3;
}

.details-head h3 {
    font-size: 20px;
    line-height: 26px;
    font-weight: 600;
    color: #111827;
}

.details-head p {
    margin-top: 5px;
    font-size: 15px;
    line-height: 20px;
    color: #4b5563;
}

.details-body {
    padding: 20px 19px 40px 20px;
}

.label-row {
    height: 20px;
    margin-bottom: 6px;
    display: flex;
    justify-content: space-between;
    align-items: center;
    font-size: 15px;
    font-weight: 500;
    color: #374151;
}

.counter {
    color: #4b5563;
}

.text-input {
    display: block;
    width: 100%;
    height: 47px;
    padding: 0 15px;
    font-family: inherit;
    font-size: 17.6px;
    background-color: #fff;
    border: 1px solid #d1d5db;
    border-radius: 12px;
}

.text-input::placeholder {
    color: #8a909c;
}

.helper {
    margin-top: 6px;
    font-size: 15px;
    line-height: 18px;
    color: #6b7280;
}

.desc-label {
    margin-top: 14.4px;
    margin-bottom: 6.6px;
}

.editor {
    border: 1px solid #ccc;
}

.editor-bar {
    height: 51px;
    padding-left: 21px;
    display: flex;
    align-items: center;
    border-bottom: 1px solid #ccc;
}

.picker {
    width: 90px;
    font-family: "Liberation Sans", Arial, sans-serif;
    font-size: 17.6px;
    color: #444;
}

.ql-arrows {
    margin-right: 31px;
    fill: #444;
    stroke: #444;
    stroke-width: 2;
    stroke-linejoin: round;
}

.ql {
    width: 20px;
    height: 20px;
    margin-right: 15px;
    fill: none;
    stroke: #444;
    stroke-width: 2;
    stroke-linecap: round;
}

.ql-bold {
    stroke-width: 2;
}

.ql-fill {
    fill: #444;
    stroke: none;
}

.ql-thin {
    stroke-width: 1;
}

.ql-gap {
    margin-left: 18px;
}

.ql-gap2 {
    margin-left: 19px;
}

.editor-area {
    height: 111.4px;
    background-color: #fff;
}

.two-col {
    margin-top: 15px;
    display: grid;
    grid-template-columns: 499px 498px;
    gap: 15px;
}

.select-box {
    height: 46px;
    border: 1px solid #d1d5db;
    border-radius: 12px;
    background-color: #fff;
}

.activate {
    position: absolute;
    left: 1554px;
    top: 815px;
    font-family: "Open Sans", "Noto Sans", sans-serif;
    font-weight: 300;
    color: rgba(0, 0, 0, 0.3);
}

.activate-title {
    font-size: 25px;
    line-height: 31px;
}

.activate-sub {
    font-size: 18px;
    line-height: 24px;
    margin-top: 2px;
}

/* windows taskbar */
.taskbar {
    height: 50px;
    flex: none;
    display: flex;
    align-items: center;
    padding-left: 19px;
    background: linear-gradient(90deg, #eeeee6, #e6e6e4 40%, #dde0ea);
    position: relative;
    z-index: 4;
    font-family: "Open Sans", "Noto Sans", sans-serif;
    color: #1c1c1c;
}

.win-logo {
    margin-right: 21px;
}

.search {
    width: 359px;
    height: 49px;
    margin-top: 1px;
    padding-left: 14px;
    display: flex;
    align-items: center;
    background-color: #fff;
    border: 1px solid #d4d4d4;
    overflow: hidden;
}

.search-text {
    margin: 0 0 2px 12px;
    font-size: 18px;
}

.city {
    margin-left: auto;
    align-self: flex-end;
}

.task-view {
    margin-left: 21px;
}

.app {
    flex: none;
}

.app-copilot {
    margin-left: 38px;
}

.app-edge {
    margin-left: 32px;
}

.app-folder {
    margin-left: 32px;
}

.app-outlook {
    margin-left: 33px;
}

.app-brave {
    margin-left: 34px;
}

.app-wrap {
    height: 50px;
    display: flex;
    align-items: center;
    justify-content: center;
    position: relative;
    border-bottom: 3px solid #0a78d4;
}

.app-tl {
    width: 51px;
    margin-left: 23px;
}

.tl-box {
    width: 30px;
    height: 30px;
    background-color: #000;
    color: #2f9bef;
    font-size: 19px;
    font-weight: 300;
    text-align: center;
    line-height: 30px;
}

.app-chrome {
    width: 60px;
    margin-left: 6px;
    background-color: #f4f4f2;
}

.chrome-badge {
    position: absolute;
    left: 33px;
    top: 26px;
    width: 16px;
    height: 16px;
    border-radius: 50%;
    background-color: #6aa53a;
    color: #fff;
    font-size: 10px;
    line-height: 16px;
    text-align: center;
}

.app-whatsapp {
    width: 51px;
    margin-left: 7px;
}

.wa-icon {
    margin-right: 3px;
}

.wa-badge {
    position: absolute;
    left: 29px;
    top: 24px;
    width: 23px;
    height: 23px;
    border-radius: 50%;
    background-color: #d9d9d9;
    border: 1px solid #555;
    font-size: 13px;
    line-height: 21px;
    text-align: center;
}

.tray {
    margin-left: auto;
    display: flex;
    align-items: center;
    font-size: 14.5px;
}

.tray-chevron {
    margin-right: 15px;
}

.tray-meet {
    margin-right: 12px;
}

.tray-cast {
    position: relative;
    height: 20px;
    margin-right: 10px;
}

.cast-dot {
    position: absolute;
    left: 12px;
    top: 11px;
    width: 9px;
    height: 9px;
    border-radius: 50%;
    background-color: #fb9a17;
}

.tray-battery {
    margin-right: 14px;
}

.tray-wifi {
    margin-right: 10px;
}

.tray-sound {
    margin-right: 8px;
}

.tray-lang {
    width: 40px;
    text-align: center;
    line-height: 23px;
    margin-right: 9px;
}

.tray-clock {
    width: 70px;
    text-align: center;
    line-height: 23px;
    margin-right: 22px;
}

.tray-notify {
    position: relative;
    height: 19px;
    margin: -6px 31px 0 0;
}

.notify-badge {
    position: absolute;
    left: 9px;
    top: 9px;
    width: 21px;
    height: 21px;
    border-radius: 50%;
    background-color: #d9dbe2;
    border: 1px solid #555;
    font-size: 14px;
    font-weight: 600;
    line-height: 19px;
    text-align: center;
}
```
